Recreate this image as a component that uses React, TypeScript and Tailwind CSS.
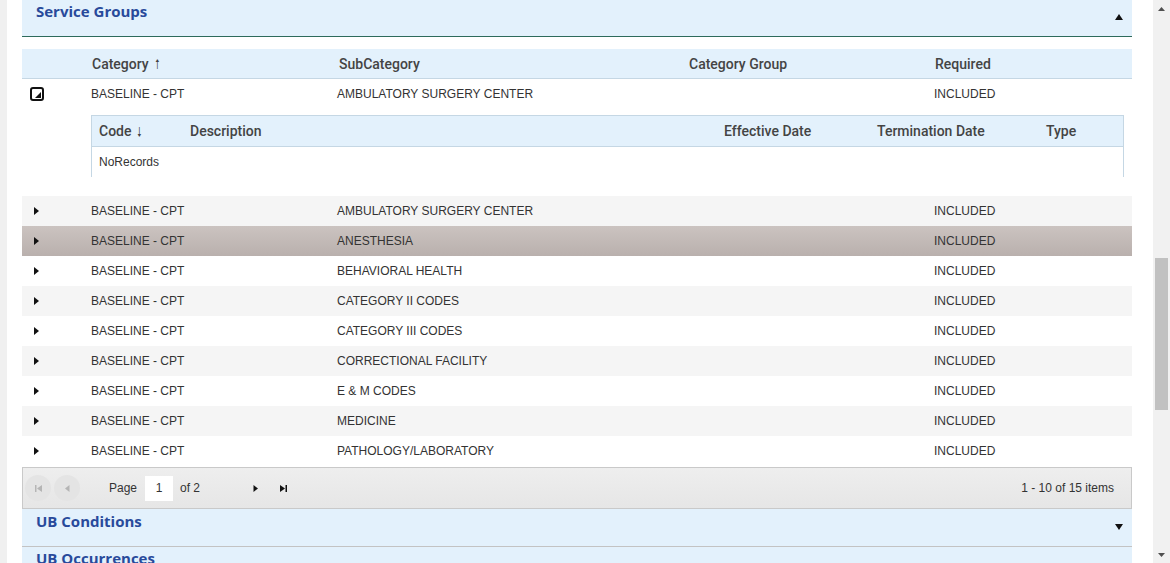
import React from "react";

const rows = [
  { sub: "AMBULATORY SURGERY CENTER", bg: "bg-[#f5f5f5]" },
  { sub: "ANESTHESIA", bg: "bg-gradient-to-b from-[#cbc3c0] to-[#b9b0ad]" },
  { sub: "BEHAVIORAL HEALTH", bg: "bg-white" },
  { sub: "CATEGORY II CODES", bg: "bg-[#f5f5f5]" },
  { sub: "CATEGORY III CODES", bg: "bg-white" },
  { sub: "CORRECTIONAL FACILITY", bg: "bg-[#f5f5f5]" },
  { sub: "E & M CODES", bg: "bg-white" },
  { sub: "MEDICINE", bg: "bg-[#f5f5f5]" },
  { sub: "PATHOLOGY/LABORATORY", bg: "bg-white" },
];

function Caret({ up }: { up?: boolean }) {
  return (
    <svg width="8" height="6" viewBox="0 0 8 6">
      <path d={up ? "M0 6 L4 0 L8 6 Z" : "M0 0 L8 0 L4 6 Z"} fill="#111" />
    </svg>
  );
}

function RightArrow() {
  return (
    <svg width="5" height="8" viewBox="0 0 5 8">
      <path d="M0 0 L5 4 L0 8 Z" fill="#111" />
    </svg>
  );
}

function GridRow({ sub, bg }: { sub: string; bg: string }) {
  return (
    <div className={`flex h-[30px] items-center text-[12px] text-[#333] ${bg}`}>
      <div className="w-[69px] pl-[12px]">
        <RightArrow />
      </div>
      <div className="w-[246px]">BASELINE - CPT</div>
      <div className="w-[597px]">{sub}</div>
      <div>INCLUDED</div>
    </div>
  );
}

function PagerBtn({ kind, disabled }: { kind: "first" | "prev" | "next" | "last"; disabled?: boolean }) {
  const c = disabled ? "#b5b5b5" : "#111";
  return (
    <div
      className={`flex h-[26px] w-[26px] items-center justify-center rounded-full ${
        disabled ? "bg-[#e4e4e4]" : ""
      }`}
    >
      <svg width="9" height="9" viewBox="0 0 9 9">
        {kind === "first" && (
          <>
            <rect x="1" y="1" width="1.5" height="7" fill={c} />
            <path d="M8 1 L3 4.5 L8 8 Z" fill={c} />
          </>
        )}
        {kind === "prev" && <path d="M6.5 1 L2 4.5 L6.5 8 Z" fill={c} />}
        {kind === "next" && <path d="M2.5 1 L7 4.5 L2.5 8 Z" fill={c} />}
        {kind === "last" && (
          <>
            <path d="M1 1 L6 4.5 L1 8 Z" fill={c} />
            <rect x="6.5" y="1" width="1.5" height="7" fill={c} />
          </>
        )}
      </svg>
    </div>
  );
}

export default function App() {
  return (
    <div className="flex h-[563px] w-[1170px] overflow-hidden bg-white font-['Liberation_Sans',Arial,sans-serif]">
      <div className="w-[7px] shrink-0 bg-[#f0f0f0]" />
      <div className="w-[15px] shrink-0" />

      <div className="w-[1110px] shrink-0">
        {/* Service Groups header */}
        <div className="flex h-[37px] items-start justify-between border-b border-[#2e6b5c] bg-[#e3f1fc] pl-[14px] pr-[9px]">
          <div className="font-['Open_Sans',sans-serif] text-[15px] font-bold text-[#284a9b]">
            Service Groups
          </div>
          <div className="mt-[14px]">
            <Caret up />
          </div>
        </div>

        <div className="h-[12px]" />

        {/* grid header */}
        <div className="flex h-[30px] items-center border-b border-[#c5d7e4] bg-[#e3f1fc] pt-[1px] font-['Roboto',sans-serif] text-[14px] font-medium text-[#444]">
          <div className="w-[70px]" />
          <div className="flex w-[247px] items-center gap-[6px]">
            Category
            <span className="text-[13px] leading-none">🠑</span>
          </div>
          <div className="w-[350px]">SubCategory</div>
          <div className="w-[246px]">Category Group</div>
          <div>Required</div>
        </div>

        {/* expanded master row */}
        <div className="flex h-[30px] items-center text-[12px] text-[#333]">
          <div className="w-[69px] pl-[8px]">
            <div className="relative h-[14px] w-[14px] rounded-[3px] border-2 border-[#111]">
              <svg className="absolute right-[1px] bottom-[1px]" width="6" height="6" viewBox="0 0 6 6">
                <path d="M6 0 L6 6 L0 6 Z" fill="#111" />
              </svg>
            </div>
          </div>
          <div className="w-[246px]">BASELINE - CPT</div>
          <div className="w-[597px]">AMBULATORY SURGERY CENTER</div>
          <div>INCLUDED</div>
        </div>

        {/* detail row */}
        <div className="h-[87px] pl-[69px] pr-[8px] pt-[6px]">
          <div className="h-[62px] border-x border-t border-[#c5d7e4]">
            <div className="flex h-[31px] items-center border-b border-[#c5d7e4] bg-[#e3f1fc] font-['Roboto',sans-serif] text-[14px] font-medium text-[#444]">
              <div className="flex w-[98px] items-center gap-[6px] pl-[7px]">
                Code
                <span className="text-[13px] leading-none">🠓</span>
              </div>
              <div className="w-[534px]">Description</div>
              <div className="w-[153px]">Effective Date</div>
              <div className="w-[169px]">Termination Date</div>
              <div>Type</div>
            </div>
            <div className="flex h-[30px] items-center pl-[7px] text-[12px] text-[#333]">NoRecords</div>
          </div>
        </div>

        {rows.map((r) => (
          <GridRow key={r.sub} sub={r.sub} bg={r.bg} />
        ))}

        {/* pager */}
        <div className="mt-[1px] flex h-[42px] items-center justify-between border border-[#c9c9c9] bg-gradient-to-b from-[#eeeeee] to-[#e6e6e6] pl-[2px] pr-[17px] text-[12px] text-[#333]">
          <div className="flex items-center">
            <PagerBtn kind="first" disabled />
            <div className="w-[3px]" />
            <PagerBtn kind="prev" disabled />
            <div className="ml-[29px]">Page</div>
            <div className="ml-[8px] flex h-[25px] w-[28px] items-center justify-center bg-white">1</div>
            <div className="ml-[7px]">of 2</div>
            <div className="ml-[42px]">
              <PagerBtn kind="next" />
            </div>
            <div className="ml-[2px]">
              <PagerBtn kind="last" />
            </div>
          </div>
          <div>1 - 10 of 15 items</div>
        </div>

        {/* UB Conditions */}
        <div className="flex h-[39px] items-start justify-between border-b-2 border-[#c3c3c3] bg-[#e3f1fc] pl-[14px] pr-[9px]">
          <div className="mt-[1px] font-['Open_Sans',sans-serif] text-[15px] font-bold text-[#284a9b]">
            UB Conditions
          </div>
          <div className="mt-[15px]">
            <Caret />
          </div>
        </div>

        {/* UB Occurrences */}
        <div className="h-[40px] bg-[#e3f1fc] pl-[14px]">
          <div className="-mt-[1px] font-['Open_Sans',sans-serif] text-[15px] font-bold text-[#284a9b]">
            UB Occurrences
          </div>
        </div>
      </div>

      <div className="w-[21px] shrink-0" />

      {/* scrollbar */}
      <div className="flex w-[17px] shrink-0 flex-col items-center bg-[#f1f1f1]">
        <div className="flex h-[17px] items-center">
          <svg width="7" height="4" viewBox="0 0 7 4">
            <path d="M0 4 L3.5 0 L7 4 Z" fill="#505050" />
          </svg>
        </div>
        <div className="h-[241px]" />
        <div className="h-[152px] w-[13px] bg-[#c1c1c1]" />
        <div className="flex-1" />
        <div className="flex h-[17px] items-center">
          <svg width="7" height="4" viewBox="0 0 7 4">
            <path d="M0 0 L7 0 L3.5 4 Z" fill="#505050" />
          </svg>
        </div>
      </div>
    </div>
  );
}
